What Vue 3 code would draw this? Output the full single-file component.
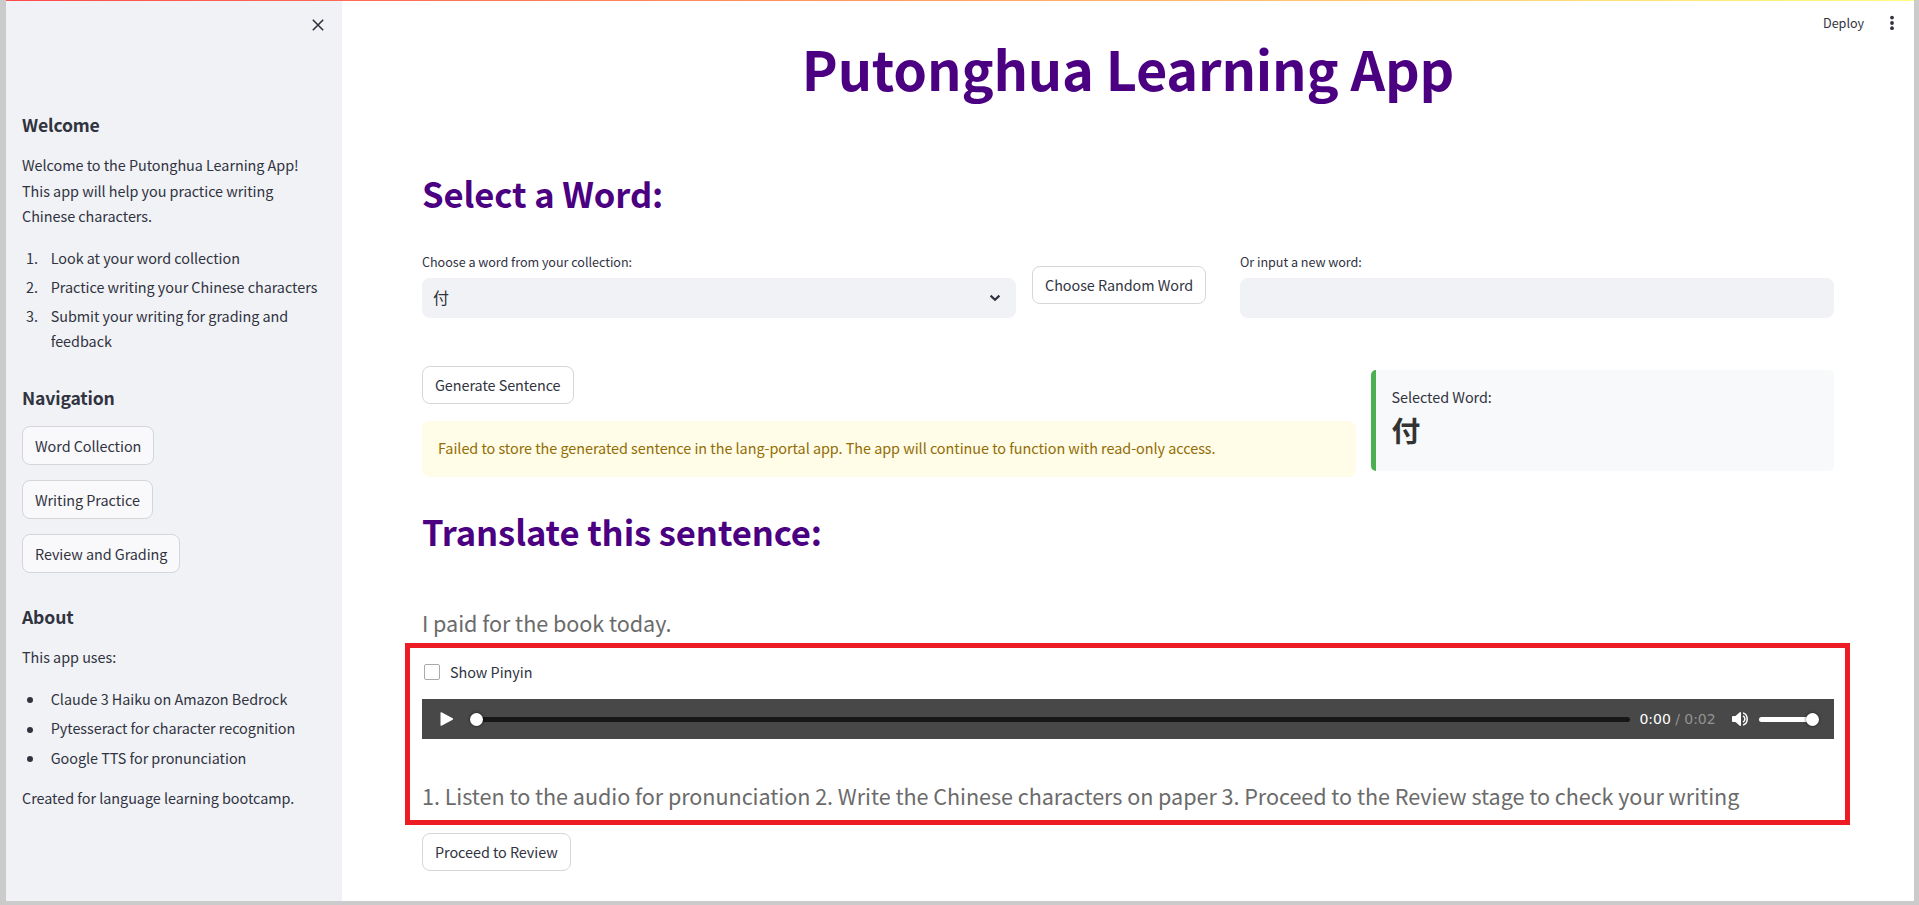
<script setup>
const steps = [
  'Look at your word collection',
  'Practice writing your Chinese characters',
  'Submit your writing for grading and feedback',
]
const pages = ['Word Collection', 'Writing Practice', 'Review and Grading']
const tools = [
  'Claude 3 Haiku on Amazon Bedrock',
  'Pytesseract for character recognition',
  'Google TTS for pronunciation',
]
</script>

<template>
  <div class="frame">
    <div class="strip"></div>
    <aside class="sidebar">
      <svg class="close" viewBox="0 0 12 12"><path d="M0.8 0.8L11.2 11.2M11.2 0.8L0.8 11.2" /></svg>
      <h3>Welcome</h3>
      <p class="intro">Welcome to the Putonghua Learning App!<br />This app will help you practice writing Chinese characters.</p>
      <ol class="list">
        <li v-for="(s, i) in steps" :key="s"><span class="num">{{ i + 1 }}.</span><span>{{ s }}</span></li>
      </ol>
      <h3 class="nav-title">Navigation</h3>
      <nav>
        <button v-for="p in pages" :key="p" class="btn">{{ p }}</button>
      </nav>
      <h3 class="about-title">About</h3>
      <p class="uses">This app uses:</p>
      <ul class="list bullets">
        <li v-for="t in tools" :key="t"><i class="dot"></i><span>{{ t }}</span></li>
      </ul>
      <p class="created">Created for language learning bootcamp.</p>
    </aside>

    <main>
      <div class="toolbar">
        <span>Deploy</span>
        <svg viewBox="0 0 6 16"><circle cx="3" cy="2.6" r="1.9" /><circle cx="3" cy="8" r="1.9" /><circle cx="3" cy="13.2" r="1.9" /></svg>
      </div>
      <h1>Putonghua Learning App</h1>
      <h2 class="select-title">Select a Word:</h2>
      <div class="pickers">
        <div>
          <label>Choose a word from your collection:</label>
          <div class="field">
            <span class="value">付</span>
            <svg viewBox="0 0 12 8"><path d="M1.6 1.6L6 5.8L10.4 1.6" /></svg>
          </div>
        </div>
        <div><button class="btn random">Choose Random Word</button></div>
        <div>
          <label>Or input a new word:</label>
          <div class="field"></div>
        </div>
      </div>
      <div class="result">
        <div>
          <button class="btn generate">Generate Sentence</button>
          <div class="warning">Failed to store the generated sentence in the lang-portal app. The app will continue to function with read-only access.</div>
        </div>
        <div class="card">
          <div>Selected Word:</div>
          <div class="word">付</div>
        </div>
      </div>
      <h2 class="translate-title">Translate this sentence:</h2>
      <p class="big sentence">I paid for the book today.</p>
      <section class="highlight">
        <div class="check"><i></i><span>Show Pinyin</span></div>
        <div class="player">
          <svg class="play" viewBox="0 0 14 14"><path d="M0.5 0.8Q0.5 0 1.5 0.3L12.7 6.2Q13.6 7 12.7 7.8L1.5 13.7Q0.5 14 0.5 13.2Z" /></svg>
          <div class="track"><i class="knob"></i></div>
          <div class="time">0:00 <span>/ 0:02</span></div>
          <svg class="speaker" viewBox="0 0 16 14">
            <path d="M0 5Q0 4 1 4H3.5L7.5 0.4Q9 -0.4 9 1V13Q9 14.4 7.5 13.6L3.5 10H1Q0 10 0 9Z" />
            <path class="wave" d="M11 3.9Q12.9 5 12.9 7Q12.9 9 11 10.1M11 0.9Q15.2 2.2 15.2 7Q15.2 11.8 11 13.1" />
          </svg>
          <div class="volume"><i class="knob"></i></div>
        </div>
        <p class="big hint">1. Listen to the audio for pronunciation 2. Write the Chinese characters on paper 3. Proceed to the Review stage to check your writing</p>
      </section>
      <button class="btn proceed">Proceed to Review</button>
    </main>
  </div>
</template>

<style>
body { margin: 0; background: #ccc; }
</style>

<style scoped>
* { box-sizing: border-box; }
.frame {
  position: relative;
  display: flex;
  width: 1919px;
  height: 905px;
  overflow: hidden;
  border: solid #cbcbcb;
  border-width: 0 5px 4px 6px;
  background: #fff;
  color: #31333f;
  font: 14.4px/25.6px "Noto Sans CJK SC", sans-serif;
  letter-spacing: -0.035px;
}
.strip {
  position: absolute;
  z-index: 1;
  left: 0; top: 0; right: 0;
  height: 1px;
  background: linear-gradient(90deg, #ff4b4b, #fffd80);
}
h1, h2, h3, p, ol, ul { margin: 0; padding: 0; list-style: none; }
.sidebar { position: relative; flex: none; width: 336px; padding: 112px 16px 0; background: #f0f2f6; }
.close { position: absolute; left: 306px; top: 19px; width: 12px; height: 12px; fill: none; stroke: #31333f; stroke-width: 1.6; }
h3 { font-size: 17.6px; line-height: 26px; font-weight: 600; letter-spacing: -0.16px; }
.intro { margin-top: 14px; }
.list { margin-top: 16px; }
.list li { display: flex; margin-bottom: 3.4px; padding-left: 4px; }
.num { flex: none; width: 24.7px; }
.nav-title { margin-top: 31.4px; }
nav { display: flex; flex-direction: column; align-items: flex-start; gap: 15.6px; margin-top: 15px; }
.btn {
  display: block;
  height: 38.4px;
  padding: 0 12px;
  border: 1px solid #d5d6d9;
  border-radius: 8px;
  background: #fff;
  color: #31333f;
  font: inherit;
  letter-spacing: -0.05px;
  line-height: 25.6px;
  white-space: nowrap;
}
nav .btn { background: #f9f9fb; }
.about-title { margin-top: 31.4px; }
.uses { margin-top: 14px; }
.bullets { margin-top: 16.4px; }
.bullets li { padding-left: 5px; align-items: center; margin-bottom: 3.8px; }
.dot { flex: none; width: 6px; height: 6px; margin: 3px 17.7px 0 0; border-radius: 50%; background: #31333f; }
.created { margin-top: 15px; }

main { position: relative; flex: 1; min-width: 0; padding: 35.4px 80px 0 80px; }
.toolbar { position: absolute; right: 19px; top: 12px; display: flex; align-items: center; gap: 25px; font-size: 12.6px; line-height: 22px; }
.toolbar svg { width: 6px; height: 16px; fill: #31333f; }
h1 { font-size: 54px; line-height: 66px; font-weight: 700; text-align: center; color: #4b0082; letter-spacing: -0.2px; }
h2 { font-size: 34.6px; line-height: 44px; font-weight: 600; color: #4b0082; letter-spacing: -0.1px; }
.select-title { margin-top: 69.6px; }
.pickers { display: grid; grid-template-columns: 594px 192px 594px; gap: 16px; margin-top: 36px; }
label { display: block; font-size: 12.6px; line-height: 22px; }
.field { display: flex; align-items: center; justify-content: space-between; height: 40px; margin-top: 5px; padding: 0 15px 0 11px; border-radius: 8px; background: #f0f2f6; }
.value { font-size: 16px; line-height: 24px; margin-top: -2px; }
.field svg { width: 12px; height: 8px; fill: none; stroke: #31333f; stroke-width: 2.2; }
.random { margin-top: 15px; }
.result { display: grid; grid-template-columns: 933.5px 463px; gap: 15.5px; margin-top: 48px; }
.warning { height: 55.6px; margin-top: 16.6px; padding: 14px 16px; border-radius: 8px; background: #fffce7; color: #926c05; }
.card { height: 101px; margin-top: 4px; padding: 14.4px 15.5px; border-left: 5px solid #4caf50; border-radius: 5px; background: #f8f9fb; }
.word { margin-top: -1px; font-size: 28.8px; line-height: 42px; font-weight: 700; color: #333; }
.translate-title { margin-top: 32px; }
.big { font-size: 21.6px; line-height: 36px; color: #6b6b6b; letter-spacing: -0.052px; white-space: nowrap; }
.sentence { margin-top: 52.4px; }
.highlight { width: 1445px; height: 182px; margin: 1.6px 0 0 -17px; padding: 16px 11px 0 12px; border: 5px solid #ed1c24; }
.check { display: flex; align-items: center; gap: 10px; height: 16px; padding-left: 2px; }
.check i { width: 16px; height: 16px; border: 1px solid #a9aab0; border-radius: 2px; }
.player { display: flex; align-items: center; height: 40px; margin-top: 19px; padding: 0 16px 0 18px; background: #484848; }
.play { flex: none; width: 14px; height: 14px; fill: #fff; }
.track, .volume { position: relative; height: 5px; border-radius: 3px; margin-top: 1px; }
.track { flex: 1; margin-left: 17px; background: #171717; }
.knob { position: absolute; top: -4px; width: 13px; height: 13px; border-radius: 50%; background: #fff; box-shadow: 0 0 3px rgba(0, 0, 0, 0.7); }
.track .knob { left: -1px; }
.time { flex: none; width: 76px; margin-left: 9.5px; color: #fff; font: 14px/20px "DejaVu Sans", sans-serif; white-space: nowrap; }
.time span { color: #929292; }
.speaker { flex: none; width: 16px; height: 14px; margin-left: 16.5px; fill: #fff; }
.wave { fill: none; stroke: #fff; stroke-width: 1.5; }
.volume { flex: none; width: 59px; margin-left: 11px; background: #fff; }
.volume .knob { right: -1px; }
.hint { margin-top: 39px; }
.proceed { margin-top: 8px; }
</style>
